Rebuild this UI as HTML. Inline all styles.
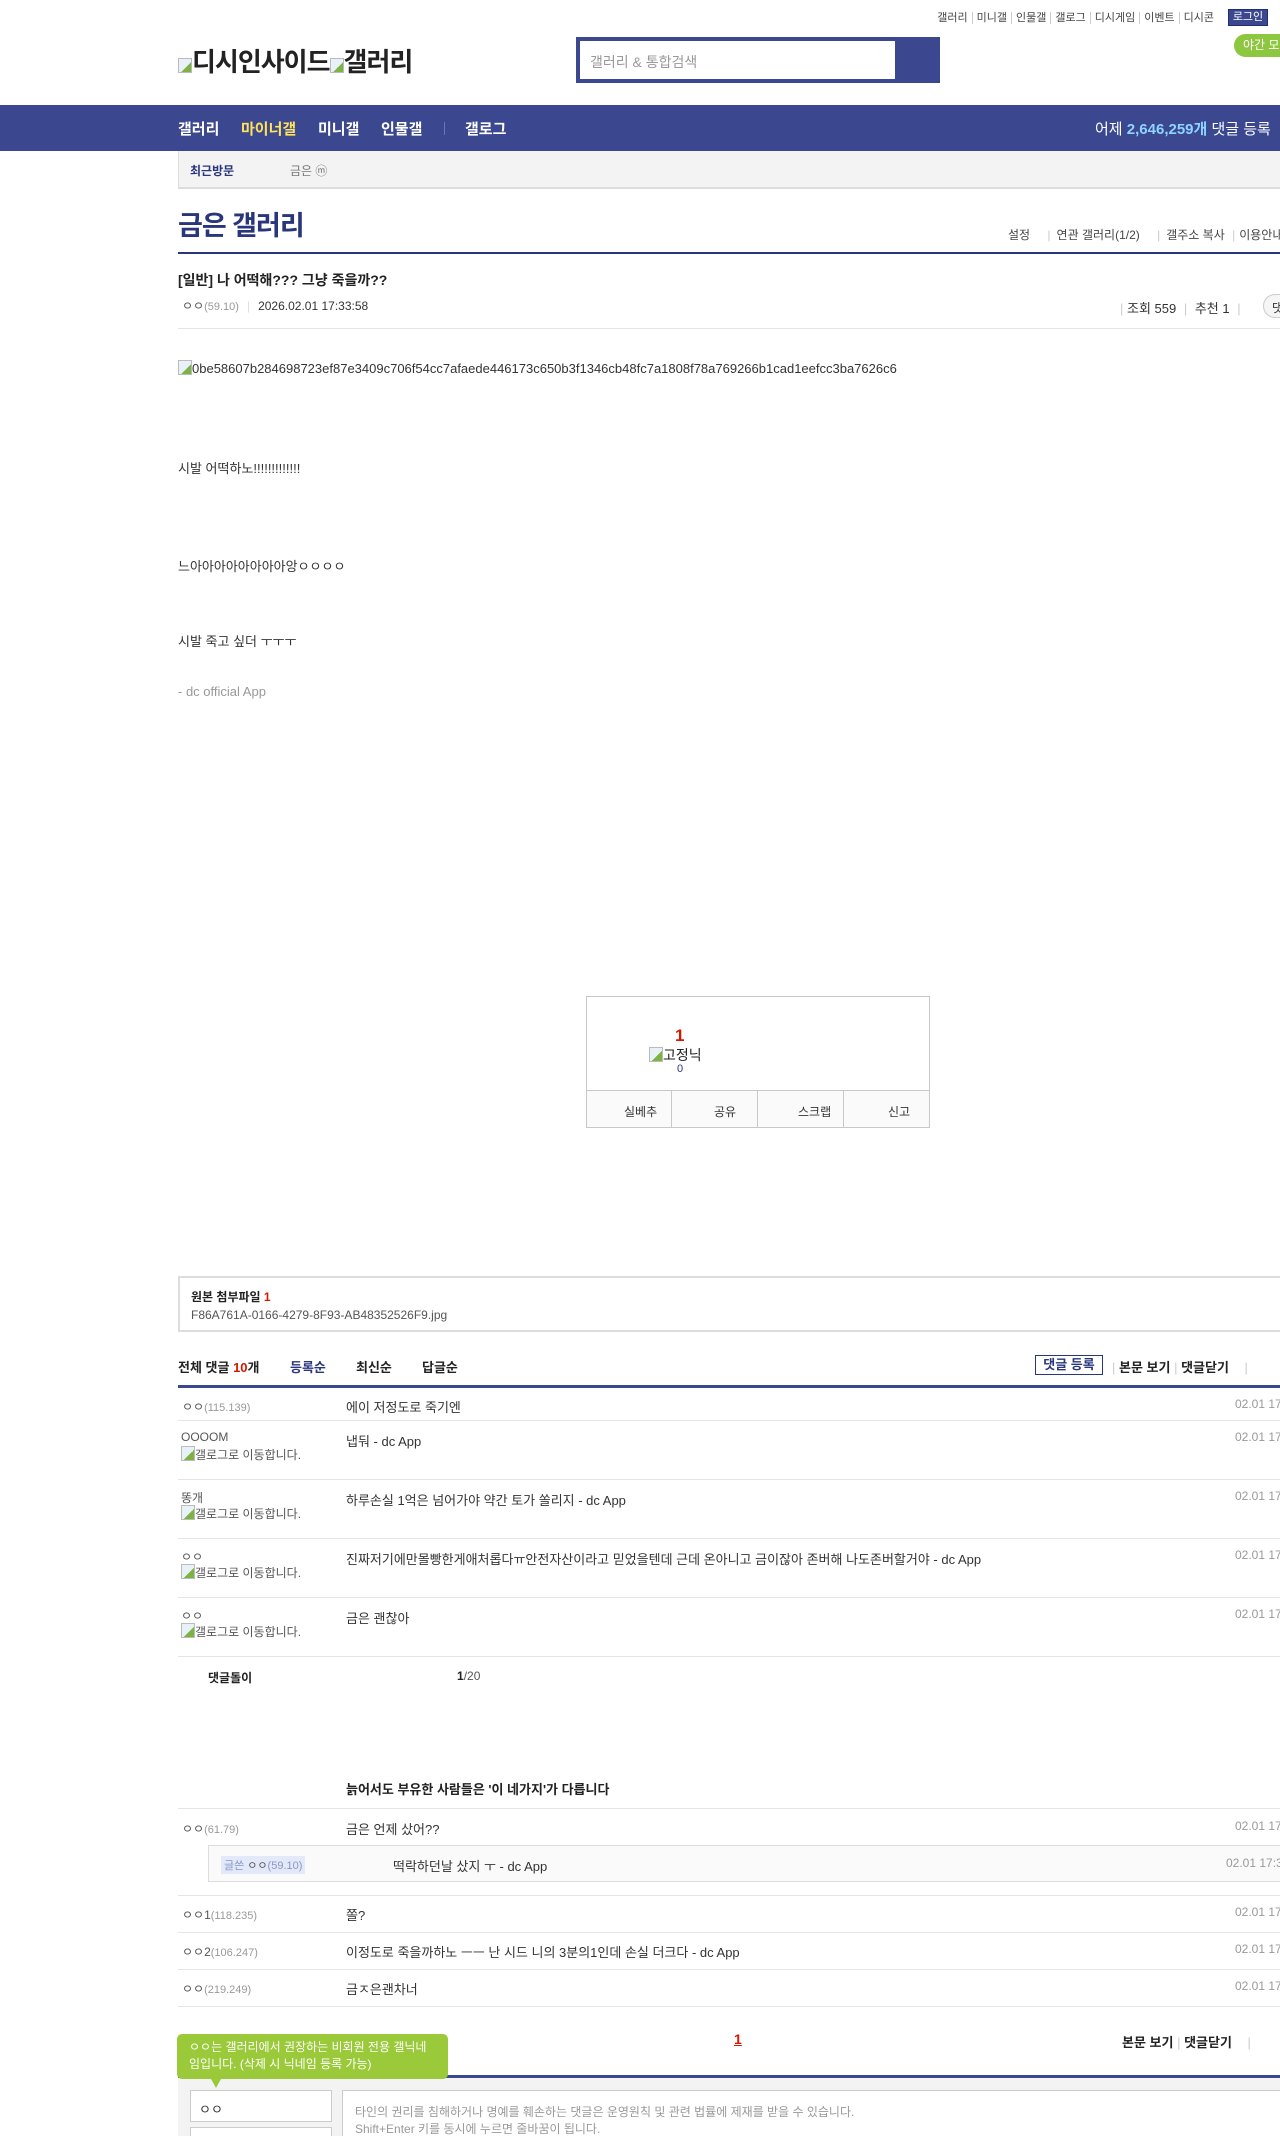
<!DOCTYPE html>
<html><head><meta charset="utf-8">
<style>
*{margin:0;padding:0;box-sizing:border-box}
html,body{width:1280px;height:2136px;overflow:hidden;background:#fff}
body{font-family:"Liberation Sans","Noto Sans CJK KR",sans-serif;font-size:13px;color:#333;position:relative}
.a{position:absolute;white-space:nowrap}
.toplinks{top:9px;right:62px;font-size:11px;color:#444}
.toplinks span{padding:0 4px;border-left:1px solid #ccc}
.toplinks span:first-child{border:0}
.nav{top:105px;left:0;width:1280px;height:46px;background:#3b4890}
.nav b{position:absolute;top:13px;font-size:15px;color:#fff}
.line{position:absolute;height:1px;background:#e5e5e5;left:178px;width:1102px}
.nick{color:#555;font-size:12px}
.ip{color:#999;font-size:11px}
.date{color:#999;font-size:12px}
.bi{display:inline-block;width:14px;height:15px;border:1px solid #bbb;vertical-align:-2px;background:linear-gradient(135deg,#e8f0f8 60%,#7cb342 60%)}
</style></head><body>

<div class="a toplinks"><span>갤러리</span><span>미니갤</span><span>인물갤</span><span>갤로그</span><span>디시게임</span><span>이벤트</span><span>디시콘</span></div>
<div class="a" style="left:1228px;top:9px;width:40px;height:17px;background:#3b4890;border:1px solid #222c6e;color:#fff;font-size:11px;text-align:center;line-height:15px">로그인</div>
<div class="a" style="left:1234px;top:34px;width:60px;height:23px;background:#8dc63f;border-radius:12px;color:#fff;font-size:12px;line-height:23px;padding-left:9px">야간 모드</div>

<div class="a" style="left:178px;top:42px;font-size:26px;font-weight:bold;color:#222;letter-spacing:-1px"><span class="bi"></span>디시인사이드<span class="bi"></span>갤러리</div>

<div class="a" style="left:576px;top:37px;width:364px;height:46px;background:#3b4890"></div>
<div class="a" style="left:580px;top:41px;width:315px;height:38px;background:#fff"></div>
<div class="a" style="left:590px;top:52px;font-size:14px;color:#999">갤러리 &amp; 통합검색</div>

<div class="a nav">
<b style="left:178px">갤러리</b>
<b style="left:241px;color:#ffe15a">마이너갤</b>
<b style="left:318px">미니갤</b>
<b style="left:381px">인물갤</b>
<span style="position:absolute;left:444px;top:17px;width:1px;height:13px;background:#6b76b0"></span>
<b style="left:465px">갤로그</b>
<span style="position:absolute;left:1095px;top:13px;font-size:15px;color:#fff">어제 <b style="position:static;color:#8fd3ff;font-size:15px">2,646,259개</b> 댓글 등록</span>
</div>

<div class="a" style="left:178px;top:151px;width:1102px;height:38px;background:#f3f3f3;border-left:1px solid #ddd;border-bottom:2px solid #ddd"></div>
<div class="a" style="left:190px;top:162px;font-size:12px;font-weight:bold;color:#29367c">최근방문</div>
<div class="a" style="left:290px;top:162px;font-size:12px;color:#777">금은 ⓜ</div>

<div class="a" style="left:178px;top:204px;font-size:27px;font-weight:bold;color:#29367c;letter-spacing:-1px">금은 갤러리</div>
<div class="a" style="left:1008px;top:226px;font-size:12px;color:#444">설정 <span style="color:#ccc;margin:0 6px 0 14px">|</span>연관 갤러리(1/2) <span style="color:#ccc;margin:0 6px 0 14px">|</span>갤주소 복사 <span style="color:#ccc;margin:0 4px">|</span>이용안내</div>
<div class="a" style="left:178px;top:252px;width:1102px;height:2px;background:#29367c"></div>

<div class="a" style="left:178px;top:270px;font-size:14px;font-weight:bold;color:#222">[일반] 나 어떡해??? 그냥 죽을까??</div>
<div class="a" style="left:182px;top:297px;font-size:12px"><span class="nick">ㅇㅇ</span><span class="ip">(59.10)</span><span style="color:#ddd;margin:0 8px">|</span>2026.02.01 17:33:58</div>
<div class="a" style="left:1120px;top:298px;font-size:13px"><span style="color:#ccc">|</span> 조회 559 <span style="color:#ccc;margin:0 4px">|</span> 추천 1 <span style="color:#ccc;margin:0 4px">|</span></div>
<div class="a" style="left:1263px;top:294px;width:30px;height:24px;border:1px solid #ccc;border-radius:12px;background:#f5f5f5;font-size:12px;padding:4px 0 0 8px">댓글</div>
<div class="line" style="top:328px"></div>

<div class="a" style="left:178px;top:360px;font-size:13px"><span class="bi"></span>0be58607b284698723ef87e3409c706f54cc7afaede446173c650b3f1346cb48fc7a1808f78a769266b1cad1eefcc3ba7626c6</div>
<div class="a" style="left:178px;top:458px">시발 어떡하노!!!!!!!!!!!!!</div>
<div class="a" style="left:178px;top:556px">느아아아아아아아아앙ㅇㅇㅇㅇ</div>
<div class="a" style="left:178px;top:631px">시발 죽고 싶더 ㅜㅜㅜ</div>
<div class="a" style="left:178px;top:684px;color:#999">- dc official App</div>

<div class="a" style="left:586px;top:996px;width:344px;height:132px;border:1px solid #c8c8c8"></div>
<div class="a" style="left:675px;top:1026px;font-size:17px;font-weight:bold;color:#d31900">1</div>
<div class="a" style="left:649px;top:1045px;font-size:14px;color:#222"><span class="bi"></span>고정닉</div>
<div class="a" style="left:677px;top:1063px;font-size:11px;color:#29367c">0</div>
<div class="a" style="left:586px;top:1090px;width:344px;height:38px;border:1px solid #c8c8c8;background:#fafafa"></div>
<div class="a" style="left:671px;top:1090px;width:1px;height:38px;background:#c8c8c8"></div>
<div class="a" style="left:757px;top:1090px;width:1px;height:38px;background:#c8c8c8"></div>
<div class="a" style="left:843px;top:1090px;width:1px;height:38px;background:#c8c8c8"></div>
<div class="a" style="left:624px;top:1103px;font-size:12px">실베추</div>
<div class="a" style="left:714px;top:1103px;font-size:12px">공유</div>
<div class="a" style="left:798px;top:1103px;font-size:12px">스크랩</div>
<div class="a" style="left:888px;top:1103px;font-size:12px">신고</div>

<div class="a" style="left:178px;top:1276px;width:1110px;height:56px;border:2px solid #ddd;border-right:0"></div>
<div class="a" style="left:191px;top:1288px;font-size:12px;font-weight:bold;color:#222">원본 첨부파일 <span style="color:#d31900">1</span></div>
<div class="a" style="left:191px;top:1308px;font-size:12px;color:#555">F86A761A-0166-4279-8F93-AB48352526F9.jpg</div>

<div class="a" style="left:178px;top:1357px;font-size:13px;font-weight:bold;color:#222">전체 댓글 <span style="color:#d31900">10</span>개</div>
<div class="a" style="left:290px;top:1357px;font-size:13px;font-weight:bold;color:#29367c">등록순</div>
<div class="a" style="left:356px;top:1357px;font-size:13px;font-weight:bold;color:#222">최신순</div>
<div class="a" style="left:422px;top:1357px;font-size:13px;font-weight:bold;color:#222">답글순</div>
<div class="a" style="left:1035px;top:1355px;width:68px;height:20px;border:1px solid #29367c;font-size:13px;font-weight:bold;color:#29367c;text-align:center;line-height:18px">댓글 등록</div>
<div class="a" style="left:1112px;top:1357px;font-size:13px;font-weight:bold;color:#222"><span style="color:#ccc;font-weight:normal">|</span> 본문 보기 <span style="color:#ccc;font-weight:normal">|</span> 댓글닫기 <span style="color:#ccc;font-weight:normal;margin-left:12px">|</span></div>
<div class="a" style="left:178px;top:1385px;width:1102px;height:3px;background:#3b4890"></div>

<div class="a" style="left:182px;top:1398px"><span class="nick">ㅇㅇ</span><span class="ip">(115.139)</span></div>
<div class="a" style="left:346px;top:1397px">에이 저정도로 죽기엔</div>
<div class="a date" style="left:1235px;top:1397px">02.01 17:40:11</div>
<div class="line" style="top:1420px"></div>

<div class="a nick" style="left:181px;top:1430px">OOOOM</div>
<div class="a" style="left:181px;top:1446px;font-size:12px;color:#555;white-space:normal;width:130px;line-height:14px"><span class="bi"></span>갤로그로 이동합니다.</div>
<div class="a" style="left:346px;top:1431px">냅둬 - dc App</div>
<div class="a date" style="left:1235px;top:1430px">02.01 17:41:02</div>
<div class="line" style="top:1479px"></div>

<div class="a nick" style="left:181px;top:1489px">똥개</div>
<div class="a" style="left:181px;top:1505px;font-size:12px;color:#555;white-space:normal;width:130px;line-height:14px"><span class="bi"></span>갤로그로 이동합니다.</div>
<div class="a" style="left:346px;top:1490px">하루손실 1억은 넘어가야 약간 토가 쏠리지 - dc App</div>
<div class="a date" style="left:1235px;top:1489px">02.01 17:42:20</div>
<div class="line" style="top:1538px"></div>

<div class="a nick" style="left:181px;top:1548px">ㅇㅇ</div>
<div class="a" style="left:181px;top:1564px;font-size:12px;color:#555;white-space:normal;width:130px;line-height:14px"><span class="bi"></span>갤로그로 이동합니다.</div>
<div class="a" style="left:346px;top:1549px">진짜저기에만몰빵한게애처롭다ㅠ안전자산이라고 믿었을텐데 근데 온아니고 금이잖아 존버해 나도존버할거야 - dc App</div>
<div class="a date" style="left:1235px;top:1548px">02.01 17:43:51</div>
<div class="line" style="top:1597px"></div>

<div class="a nick" style="left:181px;top:1607px">ㅇㅇ</div>
<div class="a" style="left:181px;top:1623px;font-size:12px;color:#555;white-space:normal;width:130px;line-height:14px"><span class="bi"></span>갤로그로 이동합니다.</div>
<div class="a" style="left:346px;top:1608px">금은 괜찮아</div>
<div class="a date" style="left:1235px;top:1607px">02.01 17:45:09</div>
<div class="line" style="top:1656px"></div>

<div class="a" style="left:208px;top:1669px;font-size:12px;font-weight:bold;color:#222">댓글돌이</div>
<div class="a" style="left:457px;top:1669px;font-size:12px;color:#555"><b style="color:#222">1</b>/20</div>
<div class="a" style="left:346px;top:1779px;font-size:13px;font-weight:bold;color:#222">늙어서도 부유한 사람들은 '이 네가지'가 다릅니다</div>
<div class="line" style="top:1808px"></div>

<div class="a" style="left:182px;top:1820px"><span class="nick">ㅇㅇ</span><span class="ip">(61.79)</span></div>
<div class="a" style="left:346px;top:1819px">금은 언제 샀어??</div>
<div class="a date" style="left:1235px;top:1819px">02.01 17:46:33</div>
<div class="a" style="left:208px;top:1845px;width:1080px;height:37px;border:1px solid #ddd;border-right:0;background:#fafafa"></div>
<div class="a" style="left:221px;top:1856px;font-size:11px;background:#e3e9f8;padding:1px 3px;color:#8a96c8">글쓴 <span style="color:#555">ㅇㅇ</span>(59.10)</div>
<div class="a" style="left:393px;top:1856px">떡락하던날 샀지 ㅜ - dc App</div>
<div class="a date" style="left:1226px;top:1856px">02.01 17:35:12</div>
<div class="line" style="top:1895px"></div>

<div class="a" style="left:182px;top:1906px"><span class="nick">ㅇㅇ1</span><span class="ip">(118.235)</span></div>
<div class="a" style="left:346px;top:1905px">쫄?</div>
<div class="a date" style="left:1235px;top:1905px">02.01 17:48:00</div>
<div class="line" style="top:1932px"></div>

<div class="a" style="left:182px;top:1943px"><span class="nick">ㅇㅇ2</span><span class="ip">(106.247)</span></div>
<div class="a" style="left:346px;top:1942px">이정도로 죽을까하노 ㅡㅡ 난 시드 니의 3분의1인데 손실 더크다 - dc App</div>
<div class="a date" style="left:1235px;top:1942px">02.01 17:49:14</div>
<div class="line" style="top:1969px"></div>

<div class="a" style="left:182px;top:1980px"><span class="nick">ㅇㅇ</span><span class="ip">(219.249)</span></div>
<div class="a" style="left:346px;top:1979px">금ㅈ은괜차너</div>
<div class="a date" style="left:1235px;top:1979px">02.01 17:50:40</div>
<div class="line" style="top:2006px"></div>

<div class="a" style="left:734px;top:2031px;font-size:14px;font-weight:bold;color:#d31900;text-decoration:underline">1</div>
<div class="a" style="left:1122px;top:2032px;font-size:13px;font-weight:bold;color:#222">본문 보기 <span style="color:#ccc;font-weight:normal">|</span> 댓글닫기 <span style="color:#ccc;font-weight:normal;margin-left:12px">|</span></div>

<div class="a" style="left:178px;top:2075px;width:1102px;height:3px;background:#3b4890"></div>
<div class="a" style="left:178px;top:2078px;width:1102px;height:58px;background:#f3f3f3"></div>
<div class="a" style="left:177px;top:2034px;width:271px;height:45px;background:#9ac93a;border-radius:5px;color:#fff;font-size:12px;line-height:17px;padding:5px 12px;white-space:normal">ㅇㅇ는 갤러리에서 권장하는 비회원 전용 갤닉네임입니다. (삭제 시 닉네임 등록 가능)</div>
<div class="a" style="left:211px;top:2079px;width:0;height:0;border-left:5px solid transparent;border-right:5px solid transparent;border-top:9px solid #9ac93a"></div>
<div class="a" style="left:190px;top:2090px;width:142px;height:32px;border:1px solid #ccc;background:#fff;padding:8px 8px;font-size:13px">ㅇㅇ</div>
<div class="a" style="left:190px;top:2127px;width:142px;height:20px;border:1px solid #ccc;background:#fff"></div>
<div class="a" style="left:342px;top:2090px;width:950px;height:60px;border:1px solid #ccc;background:#fff"></div>
<div class="a" style="left:355px;top:2104px;font-size:12px;color:#999;line-height:17px">타인의 권리를 침해하거나 명예를 훼손하는 댓글은 운영원칙 및 관련 법률에 제재를 받을 수 있습니다.<br>Shift+Enter 키를 동시에 누르면 줄바꿈이 됩니다.</div>
</body></html>
